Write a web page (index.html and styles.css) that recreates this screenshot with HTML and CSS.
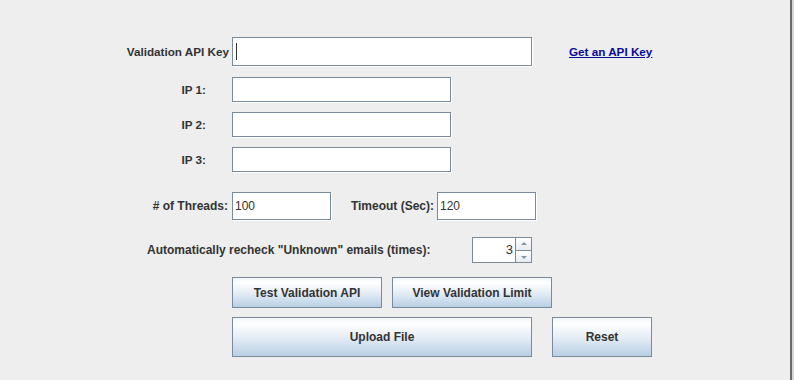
FILE: index.html
```html
<!DOCTYPE html>
<html lang="en">
<head>
    <meta charset="UTF-8">
    <title>Email Validation Settings</title>
    <link rel="stylesheet" href="styles.css">
</head>
<body>

<div class="frame">
    <div class="form">
        <div class="row row-key">
            <label class="lbl lbl-key">Validation API Key</label>
            <div class="field field-key"><span class="caret"></span></div>
            <a class="link" href="#">Get an API Key</a>
        </div>

        <div class="row row-ip">
            <label class="lbl lbl-ip">IP 1:</label>
            <div class="field field-ip"></div>
        </div>
        <div class="row row-ip">
            <label class="lbl lbl-ip">IP 2:</label>
            <div class="field field-ip"></div>
        </div>
        <div class="row row-ip">
            <label class="lbl lbl-ip">IP 3:</label>
            <div class="field field-ip"></div>
        </div>

        <div class="row row-opts">
            <label class="lbl lbl-threads"># of Threads:</label>
            <div class="field field-num">100</div>
            <label class="lbl lbl-timeout">Timeout (Sec):</label>
            <div class="field field-num">120</div>
        </div>

        <div class="row row-retry">
            <label class="lbl lbl-retry">Automatically recheck "Unknown" emails (times):</label>
            <div class="spinner">
                <div class="spin-value">3</div>
                <div class="spin-arrows">
                    <div class="spin-btn up"></div>
                    <div class="spin-btn down"></div>
                </div>
            </div>
        </div>

        <div class="row row-tools">
            <button class="btn btn-test">Test Validation API</button>
            <button class="btn btn-limit">View Validation Limit</button>
        </div>

        <div class="row row-main">
            <button class="btn btn-upload">Upload File</button>
            <button class="btn btn-reset">Reset</button>
        </div>
    </div>
</div>

</body>
</html>
```

FILE: styles.css
```css
html, body {
    margin: 0;
    height: 100%;
}

body {
    font-family: "Liberation Sans", Arial, sans-serif;
    font-size: 12px;
    color: #333333;
    background-color: #d6d6d6;
}

.frame {
    width: 790px;
    height: 380px;
    background-color: #eeeeee;
    border-right: 2px solid #696969;
}

.form {
    padding-top: 37px;
}

.row {
    display: flex;
    align-items: center;
}

.lbl {
    font-weight: bold;
    box-sizing: border-box;
    white-space: nowrap;
}

.field {
    box-sizing: border-box;
    background-color: white;
    border: 1px solid #7a8a99;
    box-shadow: 1px 1px 0 #ffffff;
    display: flex;
    align-items: center;
    padding-left: 3px;
}

/* api key */
.row-key {
    height: 29px;
}

.lbl-key {
    width: 232px;
    padding-right: 3px;
    text-align: right;
    font-size: 11.7px;
}

.field-key {
    width: 300px;
    height: 29px;
}

.caret {
    width: 1px;
    height: 17px;
    background-color: #333333;
}

.link {
    margin-left: 37px;
    font-size: 11.7px;
    color: #0a0a9a;
    font-weight: bold;
    text-decoration: underline;
}

/* ip rows */
.row-ip {
    height: 25px;
    margin-top: 10px;
}

.row-key + .row-ip {
    margin-top: 11px;
}

.lbl-ip {
    width: 232px;
    padding-right: 26px;
    text-align: right;
    font-size: 11.7px;
}

.field-ip {
    width: 219px;
    height: 25px;
}

/* threads / timeout */
.row-opts {
    margin-top: 20px;
    height: 28px;
}

.lbl-threads {
    width: 232px;
    padding-right: 4px;
    text-align: right;
}

.lbl-timeout {
    width: 106px;
    padding-right: 3px;
    text-align: right;
}

.field-num {
    width: 99px;
    height: 28px;
    padding-left: 2px;
}

/* retry spinner */
.row-retry {
    margin-top: 17px;
    height: 26px;
}

.lbl-retry {
    width: 472px;
    padding-left: 147px;
}

.spinner {
    display: flex;
    width: 60px;
    height: 26px;
    box-sizing: border-box;
    border: 1px solid #7a8a99;
    background-color: white;
}

.spin-value {
    flex: 1;
    text-align: right;
    padding-right: 2px;
    line-height: 24px;
    font-size: 13px;
    border-right: 1px solid #7a8a99;
}

.spin-arrows {
    width: 15px;
    display: flex;
    flex-direction: column;
    background-color: #eeeeee;
}

.spin-btn {
    flex: 1;
    position: relative;
    background: linear-gradient(#ffffff, #e6ecf2);
}

.spin-btn.up {
    border-bottom: 1px solid #7a8a99;
}

.spin-btn::after {
    content: "";
    position: absolute;
    left: 5px;
    top: 4px;
    border-left: 3px solid transparent;
    border-right: 3px solid transparent;
}

.spin-btn.up::after {
    border-bottom: 3px solid #8896a4;
}

.spin-btn.down::after {
    top: 5px;
    border-top: 3px solid #8896a4;
}

/* buttons */
.btn {
    box-sizing: border-box;
    font-family: inherit;
    font-size: 12px;
    font-weight: bold;
    color: #333333;
    border: 1px solid #7a8a99;
    border-radius: 0;
    background: linear-gradient(#f1f5fa 0%, #ffffff 15%, #e6eef6 50%, #b8cfe5 100%);
    padding: 0;
    cursor: pointer;
}

.row-tools {
    margin-top: 14px;
    padding-left: 232px;
    gap: 10px;
}

.btn-test {
    width: 150px;
    height: 31px;
}

.btn-limit {
    width: 160px;
    height: 31px;
}

.row-main {
    margin-top: 9px;
    padding-left: 232px;
    gap: 20px;
}

.btn-upload {
    width: 300px;
    height: 40px;
}

.btn-reset {
    width: 100px;
    height: 40px;
}
```
